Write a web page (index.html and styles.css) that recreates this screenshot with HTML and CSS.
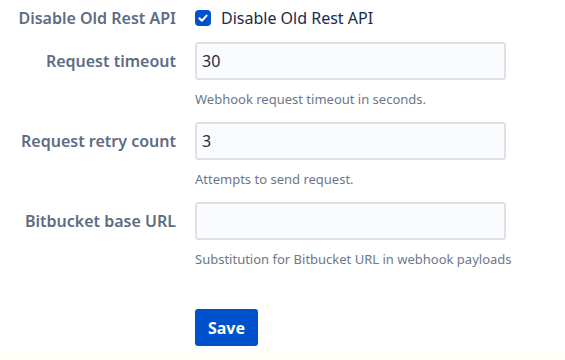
FILE: index.html
```html
<!DOCTYPE html>
<html lang="en">
<head>
  <meta charset="UTF-8" />
  <meta name="viewport" content="width=device-width, initial-scale=1.0" />
  <title>Webhook settings</title>
  <link rel="stylesheet" href="styles.css">
</head>
<body>
  <form class="settings">
    <div class="row row-check">
      <span class="label">Disable Old Rest API</span>
      <label class="check">
        <span class="box">
          <svg width="16" height="16" viewBox="0 0 16 16">
            <rect x="0" y="0" width="16" height="16" rx="4" fill="#0052cc" />
            <path d="M4.4 8.3 L6.9 10.7 L11.6 5.6" fill="none" stroke="#fff" stroke-width="2" stroke-linecap="round" stroke-linejoin="round" />
          </svg>
        </span>
        Disable Old Rest API
      </label>
    </div>

    <div class="row">
      <label class="label" for="timeout">Request timeout</label>
      <div class="field">
        <input type="text" id="timeout" value="30" />
        <p class="help">Webhook request timeout in seconds.</p>
      </div>
    </div>

    <div class="row">
      <label class="label" for="retry">Request retry count</label>
      <div class="field">
        <input type="text" id="retry" value="3" />
        <p class="help">Attempts to send request.</p>
      </div>
    </div>

    <div class="row">
      <label class="label" for="baseurl">Bitbucket base URL</label>
      <div class="field">
        <input type="text" id="baseurl" value="" />
        <p class="help">Substitution for Bitbucket URL in webhook payloads</p>
      </div>
    </div>

    <div class="row row-actions">
      <span></span>
      <button type="button" class="save">Save</button>
    </div>
  </form>
  <div class="footer"></div>
</body>
</html>
```

FILE: styles.css
```css
* {
  box-sizing: border-box;
  padding: 0;
  margin: 0;
}

body {
  font-family: 'Noto Sans', 'Open Sans', sans-serif;
  background: #fff;
  color: #172b4d;
  width: 565px;
  height: 360px;
  overflow: hidden;
}

.settings {
  display: flex;
  flex-direction: column;
}

.row {
  display: grid;
  grid-template-columns: 176px 311px;
  column-gap: 19px;
  margin-bottom: 15px;
}

.label {
  text-align: right;
  font-size: 16px;
  font-weight: 600;
  color: #5e6c84;
  line-height: 38px;
  white-space: nowrap;
}

.row-check {
  height: 36px;
  margin-bottom: 6px;
  align-items: center;
}

.row-check .label {
  line-height: 36px;
}

.check {
  display: flex;
  align-items: center;
  gap: 10px;
  font-size: 16px;
  color: #172b4d;
  white-space: nowrap;
  cursor: pointer;
}

.box {
  display: flex;
  width: 16px;
  height: 16px;
}

input[type="text"] {
  display: block;
  width: 311px;
  height: 38px;
  padding: 0 5px;
  font-family: inherit;
  font-size: 16px;
  color: #172b4d;
  background: #fafbfc;
  border: 2px solid #dfe1e6;
  border-radius: 3px;
  outline: none;
}

.help {
  margin-top: 11px;
  font-size: 13px;
  line-height: 16px;
  color: #6b778c;
  white-space: nowrap;
}

.row-actions {
  margin-top: 27px;
  margin-bottom: 5px;
}

.save {
  width: 63px;
  height: 37px;
  font-family: inherit;
  font-size: 16px;
  font-weight: 700;
  color: #fff;
  background: #0052cc;
  border: none;
  border-radius: 3px;
  cursor: pointer;
}

.footer {
  height: 10px;
  margin-left: 1px;
  background: #fffdf6;
}
```
